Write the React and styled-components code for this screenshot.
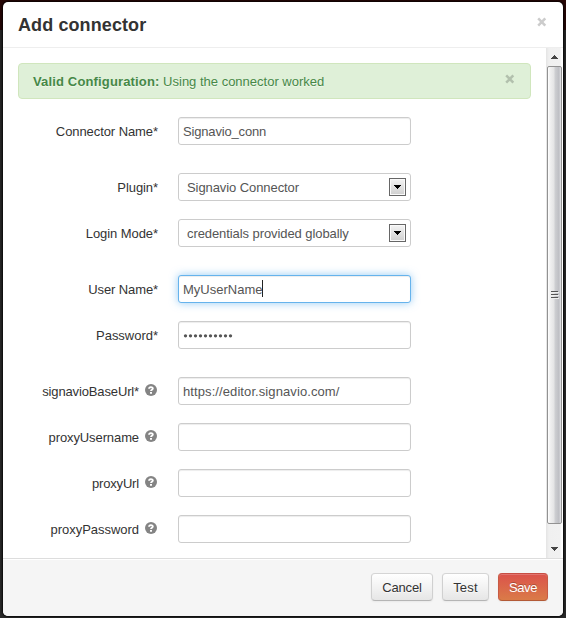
import React from 'react';
import styled, { createGlobalStyle, css } from 'styled-components';

const GlobalStyle = createGlobalStyle`
  * { box-sizing: border-box; }
  html, body { margin: 0; height: 100%; overflow: hidden; }
  body {
    background: linear-gradient(#270706 0, #220505 30px, #252525 30px, #292929 100%);
    font: 13px/18px "Liberation Sans", Arial, sans-serif;
    color: #333;
  }
`;

const Page = styled.div`
  width: 566px;
  height: 618px;
  padding: 2px 3px;
`;

const Dialog = styled.section`
  display: flex;
  flex-direction: column;
  width: 560px;
  height: 614px;
  background: #fff;
  border-radius: 5px;
  box-shadow: 0 0 2px 1px rgba(0, 0, 0, 0.8);
  overflow: hidden;
`;

const Header = styled.header`
  display: flex;
  justify-content: space-between;
  flex: none;
  height: 46px;
  padding: 9px 15px 0;
  border-bottom: 1px solid #eee;
`;

const Title = styled.h3`
  margin: 1px 0 0;
  font-size: 18px;
  line-height: 27px;
  letter-spacing: ${(p) => p.$track || 0}px;
`;

const Text = styled.span`
  letter-spacing: ${(p) => p.$track || 0}px;
  white-space: pre;
`;

const Close = styled.button`
  flex: none;
  width: 10px;
  height: 10px;
  margin: ${(p) => p.$margin};
  padding: 0;
  border: 0;
  background: none;
  color: ${(p) => p.$color};
  svg { display: block; }
`;

const Body = styled.div`
  display: flex;
  flex: none;
  height: 510px;
`;

const Content = styled.div`
  width: 543px;
  padding: 15px;
  overflow: hidden;
`;

const Alert = styled.div`
  display: flex;
  justify-content: space-between;
  height: 36px;
  margin-bottom: 18px;
  padding: 9px 15px 0 14px;
  border: 1px solid #d0e6bd;
  border-radius: 4px;
  background: #dff0d8;
  color: #468847;
  text-shadow: 0 1px 0 rgba(255, 255, 255, 0.5);
`;

const Row = styled.div`
  display: flex;
  height: 28px;
  margin-bottom: ${(p) => (p.$group ? 28 : 18)}px;
`;

const Label = styled.div`
  display: flex;
  justify-content: flex-end;
  width: 140px;
  margin-right: 20px;
  padding-top: 6px;
`;

const HelpIcon = styled.svg`
  flex: none;
  width: 12px;
  height: 12px;
  margin: 1px 1px 0 6px;
`;

const Field = styled.div`
  display: flex;
  align-items: flex-start;
  width: 233px;
  height: 28px;
  padding: ${(p) => (p.$select ? '4px 4px 0 8px' : '4px 4px 0')};
  border: 1px solid #ccc;
  border-radius: 3px;
  background: #fff;
  color: #555;
  ${(p) => !p.$select && css`box-shadow: inset 0 1px 1px rgba(0, 0, 0, 0.075);`}
  ${(p) => p.$focus && css`
    border-color: #66b3ec;
    box-shadow: inset 0 1px 1px rgba(0, 0, 0, 0.075), 0 0 8px rgba(82, 168, 236, 0.6);
  `}
`;

const Value = styled(Text)`
  padding-top: 1px;
`;

const Caret = styled.span`
  width: 1px;
  height: 17px;
  background: #222;
`;

const DropButton = styled.span`
  display: flex;
  align-items: center;
  justify-content: center;
  width: 17px;
  height: 18px;
  margin-left: auto;
  border: 1px solid #666;
  background: linear-gradient(#f4f4f4, #cfcfcf);
  box-shadow: inset 0 0 0 1px #fafafa;
`;

const Dots = styled.svg`
  width: 50px;
  height: 4px;
  margin-top: 8px;
  fill: #555;
`;

const ScrollTrack = styled.div`
  display: flex;
  flex-direction: column;
  width: 17px;
  padding: 0 1px;
  background: linear-gradient(90deg, #e4e4e4, #f0f0f0 3px, #f1f1f1 14px, #fff 16px);
`;

const ScrollArrow = styled.div`
  display: flex;
  justify-content: center;
  align-items: center;
  height: ${(p) => p.$height}px;
  padding-top: ${(p) => p.$top}px;
`;

const ScrollThumb = styled.div`
  display: flex;
  align-items: center;
  justify-content: center;
  height: 458px;
  border: 1px solid #929292;
  border-radius: 2px;
  background: linear-gradient(90deg, #fff 0, #f1f1f1 2px, #e4e4e5 6px, #cecfd2 7px, #bdbec3 11px, #e8e8ea 13px);
`;

const Footer = styled.footer`
  display: flex;
  justify-content: flex-end;
  flex: 1;
  gap: 9px;
  padding: 14px 15px 0;
  border-top: 1px solid #ddd;
  background: #f5f5f5;
  box-shadow: inset 0 1px 0 #fff;
`;

const Button = styled.button`
  width: ${(p) => p.$width}px;
  height: 28px;
  padding: 2px 0 0;
  border: 1px solid #ccc;
  border-color: #d5d5d5 #d0d0d0 #b5b5b5;
  border-radius: 4px;
  background: linear-gradient(#fff, #e6e6e6);
  box-shadow: inset 0 1px 0 rgba(255, 255, 255, 0.2), 0 1px 2px rgba(0, 0, 0, 0.05);
  color: #333;
  font: 13px/18px "Liberation Sans", Arial, sans-serif;
  text-shadow: 0 1px 1px rgba(255, 255, 255, 0.75);
  ${(p) => p.$primary && css`
    border-color: #c74e43 #c75b45 #b35a36;
    background: linear-gradient(#db524b, #da7b48);
    color: #fff;
    text-shadow: 0 -1px 0 rgba(0, 0, 0, 0.25);
  `}
`;

const CloseButton = (props) => (
  <Close aria-label="Close" {...props}>
    <svg width="10" height="10" viewBox="0 0 10 10">
      <path d="M1.2 1.3 8.3 8.7M8.3 1.3 1.2 8.7" stroke="currentColor" strokeWidth="2.5" />
    </svg>
  </Close>
);

const Help = () => (
  <HelpIcon viewBox="0 0 12 12">
    <circle cx="6" cy="6" r="6" fill="#848484" />
    <path d="M4.1 4.7C4.1 2.6 7.8 2.6 7.8 4.5 7.8 5.8 6 5.6 6 7.1" fill="none" stroke="#fff" strokeWidth="1.9" />
    <path d="M5 8h2v1.7H5z" fill="#fff" />
  </HelpIcon>
);

const Arrow = ({ down }) => (
  <svg width="7" height="4" viewBox="0 0 7 4" shapeRendering="crispEdges">
    <path d={down ? 'M0 0h7v1H6v1H5v1H4v1H3V3H2V2H1V1H0z' : 'M3 0h1v1h1v1h1v1h1v1H0V3h1V2h1V1h1z'} fill="#444" />
  </svg>
);

const fields = [
  { label: 'Connector Name*', value: 'Signavio_conn', group: true, lt: -0.08, vt: -0.17 },
  { label: 'Plugin*', value: 'Signavio Connector', select: true, lt: -0.08, vt: -0.08 },
  { label: 'Login Mode*', value: 'credentials provided globally', select: true, group: true, lt: -0.07, vt: -0.08 },
  { label: 'User Name*', value: 'MyUserName', focus: true, lt: -0.1, vt: 0 },
  { label: 'Password*', dots: 10, group: true, lt: -0.02 },
  { label: 'signavioBaseUrl*', value: 'https://editor.signavio.com/', help: true, lt: -0.14, vt: 0.09 },
  { label: 'proxyUsername', help: true, lt: -0.1 },
  { label: 'proxyUrl', help: true, lt: -0.17 },
  { label: 'proxyPassword', help: true, lt: -0.03 },
];

const FormRow = ({ item }) => (
  <Row $group={item.group}>
    <Label>
      <Text $track={item.lt}>{item.label}</Text>
      {item.help && <Help />}
    </Label>
    <Field $select={item.select} $focus={item.focus}>
      {item.value && <Value $track={item.vt}>{item.value}</Value>}
      {item.dots && (
        <Dots viewBox="0 0 50 4">
          {Array.from({ length: item.dots }, (_, i) => <circle key={i} cx={2.5 + i * 5} cy="1.8" r="1.65" />)}
        </Dots>
      )}
      {item.focus && <Caret />}
      {item.select && (
        <DropButton>
          <svg width="7" height="4" viewBox="0 0 7 4" shapeRendering="crispEdges">
            <path d="M0 0h7v1H6v1H5v1H4v1H3V3H2V2H1V1H0z" />
          </svg>
        </DropButton>
      )}
    </Field>
  </Row>
);

export default function App() {
  return (
    <Page>
      <GlobalStyle />
      <Dialog>
        <Header>
          <Title $track={0.1}>Add connector</Title>
          <CloseButton $color="#ccc" $margin="6px 1px 0 0" />
        </Header>
        <Body>
          <Content>
            <Alert>
              <span>
                <Text as="strong" $track={0.15}>Valid Configuration:</Text>
                <Text $track={0}> Using the connector worked</Text>
              </span>
              <CloseButton $color="#b2c0ad" $margin="1px 0 0" />
            </Alert>
            {fields.map((item) => <FormRow key={item.label} item={item} />)}
          </Content>
          <ScrollTrack>
            <ScrollArrow $height={18} $top={0}><Arrow /></ScrollArrow>
            <ScrollThumb>
              <svg width="8" height="9" viewBox="0 0 8 9" shapeRendering="crispEdges">
                <path d="M0 .5h7M0 3.5h7M0 6.5h7" stroke="#555" />
                <path d="M0 1.5h8M0 4.5h8M0 7.5h8" stroke="#eee" />
              </svg>
            </ScrollThumb>
            <ScrollArrow $height={34} $top={16}><Arrow down /></ScrollArrow>
          </ScrollTrack>
        </Body>
        <Footer>
          <Button $width={62}><Text $track={-0.15}>Cancel</Text></Button>
          <Button $width={47}><Text $track={0.2}>Test</Text></Button>
          <Button $width={50} $primary><Text $track={-0.4}>Save</Text></Button>
        </Footer>
      </Dialog>
    </Page>
  );
}
